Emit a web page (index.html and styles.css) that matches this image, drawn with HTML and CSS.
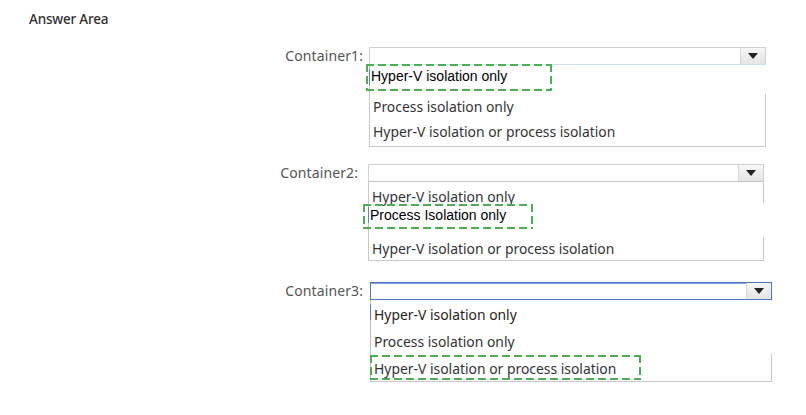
FILE: index.html
```html
<!DOCTYPE html>
<html lang="en">
<head>
<meta charset="utf-8">
<title>Answer Area</title>
<link rel="stylesheet" href="styles.css">
</head>
<body>
<div class="page">
  <h1 class="title">Answer Area</h1>

  <div class="q q1">
    <div class="label">Container1:</div>
    <div class="dd">
      <div class="sel"><span class="btn"><span class="tri"></span></span></div>
      <ul class="list">
        <li class="opt picked nr caret"><span class="mark"></span>Hyper-V isolation only</li>
        <li class="opt">Process isolation only</li>
        <li class="opt">Hyper-V isolation or process isolation</li>
      </ul>
    </div>
  </div>

  <div class="q q2">
    <div class="label">Container2:</div>
    <div class="dd">
      <div class="sel"><span class="btn"><span class="tri"></span></span></div>
      <ul class="list">
        <li class="opt">Hyper-V isolation only</li>
        <li class="opt picked nr caret"><span class="mark"></span>Process Isolation only</li>
        <li class="opt">Hyper-V isolation or process isolation</li>
      </ul>
    </div>
  </div>

  <div class="q q3">
    <div class="label">Container3:</div>
    <div class="dd">
      <div class="sel focus"><span class="btn"><span class="tri"></span></span></div>
      <ul class="list">
        <li class="opt dark nr caret">Hyper-V isolation only</li>
        <li class="opt nr">Process isolation only</li>
        <li class="opt"><span class="mark"></span>Hyper-V isolation or process isolation</li>
      </ul>
    </div>
  </div>
</div>
</body>
</html>
```

FILE: styles.css
```css
html, body {
  margin: 0;
  padding: 0;
  background: #ffffff;
}

.page {
  width: 806px;
  height: 415px;
  overflow: hidden;
  font-family: "Noto Sans", "Open Sans", sans-serif;
  color: #333;
}

.title {
  margin: 0;
  padding: 10px 0 0 29px;
  font-size: 13.5px;
  line-height: 18px;
  font-weight: 500;
  color: #2f2f2f;
  letter-spacing: -0.2px;
}

.q {
  display: flex;
  align-items: flex-start;
}

.q1 { margin-top: 19px; }
.q2 { margin-top: 17px; }
.q3 { margin-top: 21px; }

.label {
  width: 363px;
  text-align: right;
  font-size: 14px;
  line-height: 18px;
  color: #555;
  letter-spacing: 0.1px;
}

.q2 .label { width: 358px; }

.dd {
  margin-left: 6px;
  width: 397px;
}

.q2 .dd { margin-left: 10px; width: 396px; }
.q3 .dd { margin-left: 7px; width: 402px; }

.sel {
  height: 16px;
  border: 1px solid #d0d0d0;
  border-bottom-color: #cfe0ef;
  display: flex;
  justify-content: flex-end;
}

.q2 .sel { border-bottom-color: #c4c4c4; }

.sel.focus {
  border: 1px solid #4a78c4;
  box-shadow: inset 0 1px 0 #7fa0d8;
}

.btn {
  width: 24px;
  height: 16px;
  border-left: 1px solid #d6d6d6;
  background: linear-gradient(#f7f7f7, #e4e4e4);
  display: flex;
  align-items: center;
  justify-content: center;
}

.tri {
  width: 0;
  height: 0;
  border-left: 5px solid transparent;
  border-right: 5px solid transparent;
  border-top: 6px solid #222;
}

.list {
  list-style: none;
  margin: 0;
  padding: 0;
  border-left: 1px solid #c8c8c8;
  border-bottom: 1px solid #c8c8c8;
}

.opt {
  position: relative;
  height: 26px;
  line-height: 26px;
  padding-left: 3px;
  font-size: 13.9px;
  color: #333;
  white-space: nowrap;
  border-right: 1px solid #c8c8c8;
}

.opt.nr { border-right-color: transparent; }

.opt.picked {
  font-family: "Liberation Sans", Arial, sans-serif;
  font-size: 14px;
  color: #000;
  padding-left: 1px;
}

.opt.dark { color: #2a1c14; }

.caret::before {
  content: "";
  position: absolute;
  left: -1px;
  top: 4px;
  width: 1px;
  height: 16px;
  background: #5b86d6;
}

/* row spacing per question */
.q1 .opt:nth-child(1) { line-height: 23px; margin-bottom: 3px; }
.q1 .opt:nth-child(2) { height: 26px; line-height: 25px; }
.q1 .opt:nth-child(3) { line-height: 24px; }

.q2 .opt:nth-child(1) { height: 21px; line-height: 30px; }
.q2 .opt:nth-child(2) { height: 24px; line-height: 25px; margin-bottom: 10px; }
.q2 .opt:nth-child(3) { height: 23px; line-height: 24px; }

.q3 .list { border-left-color: #b8c4dc; }
.q3 .opt:nth-child(1) { height: 27px; line-height: 30px; }
.q3 .opt:nth-child(2) { height: 27px; line-height: 30px; }
.q3 .opt:nth-child(3) { height: 27px; line-height: 29px; }

/* green dashed answer markers */
.mark {
  position: absolute;
  background:
    repeating-linear-gradient(90deg, #4caf50 0 8px, transparent 8px 12px) top left / 100% 2px no-repeat,
    repeating-linear-gradient(90deg, #4caf50 0 8px, transparent 8px 12px) bottom left / 100% 2px no-repeat,
    repeating-linear-gradient(180deg, #4caf50 0 8px, transparent 8px 12px) top left / 2px 100% no-repeat,
    repeating-linear-gradient(180deg, #4caf50 0 8px, transparent 8px 12px) top right / 2px 100% no-repeat;
  pointer-events: none;
}

.q1 .mark { left: -4px; top: -1px; width: 186px; height: 27px; }
.q2 .mark { left: -6px; top: 1px; width: 170px; height: 25px; }
.q3 .mark { left: -1px; top: 1px; width: 271px; height: 25px; }
```
